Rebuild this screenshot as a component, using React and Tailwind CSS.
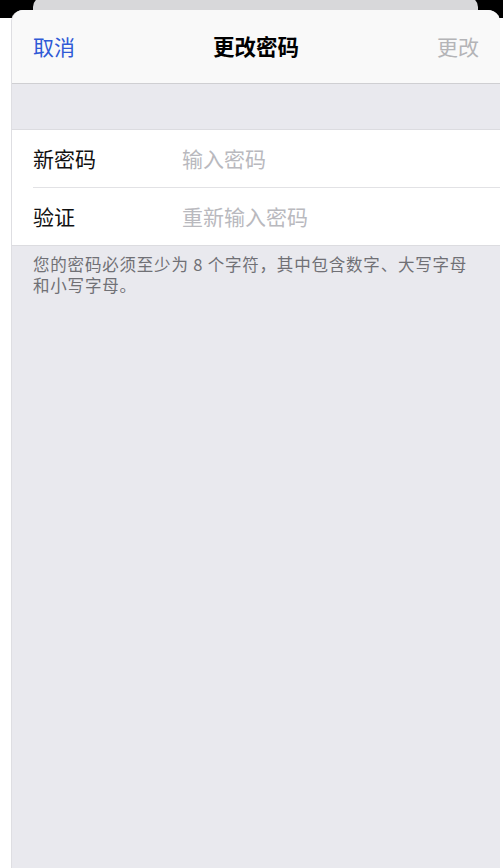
export default function App() {
  const font = { fontFamily: '"Noto Sans CJK SC", "Noto Sans", sans-serif' };
  return (
    <div className="min-h-[868px] w-full bg-white overflow-hidden" style={font}>
      <div className="h-[18px] bg-black pl-[33px] pr-[25px] overflow-hidden">
        <div className="h-[16px] -mt-[3px] rounded-t-[10px] bg-[#d8d8da]" />
      </div>
      <div className="ml-[11px] mr-[3px] -mt-[8px] min-h-[858px] rounded-t-[12px] bg-[#e9e9ee] overflow-hidden border-l border-[#dedee2]">
        <div className="h-[74px] bg-[#f9f9f9] border-b border-[#cfcfd2] grid grid-cols-[1fr_auto_1fr] items-center px-[21px]">
          <span className="text-[21px] text-[#2f5ad6] justify-self-start">取消</span>
          <span className="text-[21.5px] font-semibold text-black">更改密码</span>
          <span className="text-[21px] text-[#b4b4b7] justify-self-end">更改</span>
        </div>
        <div className="h-[45px]" />
        <div className="bg-white border-y border-[#dcdce0]">
          <div className="pl-[21px]">
            <div className="h-[58px] flex items-center border-b border-[#e2e2e5]">
              <span className="w-[149px] text-[21px] text-[#111]">新密码</span>
              <span className="text-[21px] text-[#b9b9be]">输入密码</span>
            </div>
          </div>
          <div className="pl-[21px]">
            <div className="h-[57px] flex items-center">
              <span className="w-[149px] text-[21px] text-[#111]">验证</span>
              <span className="text-[21px] text-[#b9b9be]">重新输入密码</span>
            </div>
          </div>
        </div>
        <div className="px-[21px] pt-[8px] text-[16.5px] leading-[21px] tracking-[0.8px] text-[#707075]">
          <p>您的密码必须至少为 8 个字符，其中包含数字、大写字母</p>
          <p>和小写字母。</p>
        </div>
      </div>
    </div>
  );
}
